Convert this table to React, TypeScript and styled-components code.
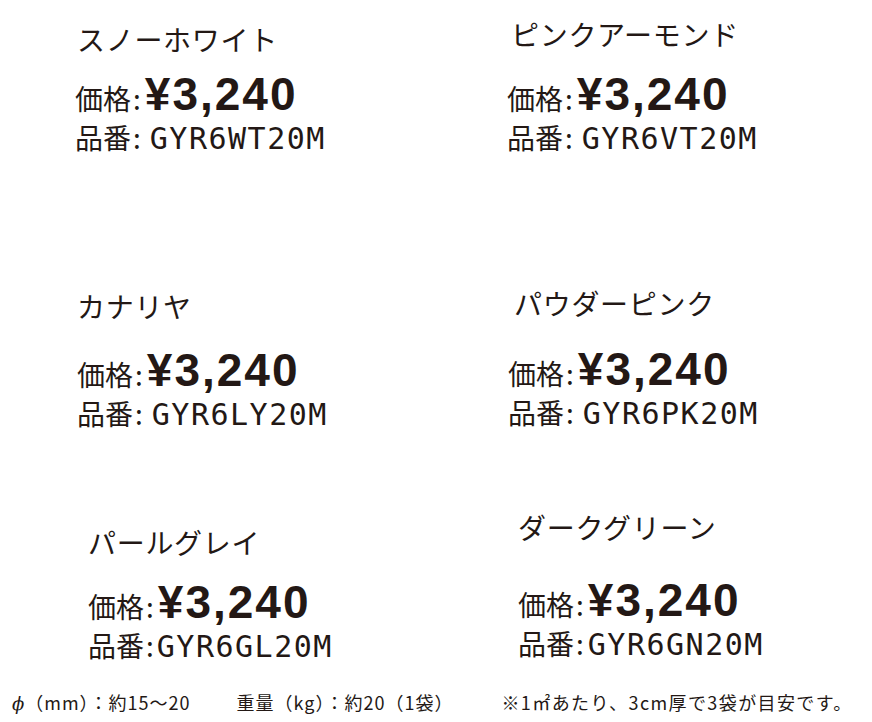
import React from "react";
import styled, { createGlobalStyle } from "styled-components";

const GlobalStyle = createGlobalStyle`
  html, body {
    margin: 0;
    padding: 0;
    background: #ffffff;
  }
  body {
    width: 872px;
    height: 722px;
    overflow: hidden;
    font-family: "Noto Sans CJK JP", "Noto Sans", sans-serif;
    color: #231815;
  }
`;

const Page = styled.div`
  width: 872px;
  height: 722px;
  display: flex;
  flex-direction: column;
`;

const Grid = styled.div`
  display: grid;
  grid-template-columns: 432px 1fr;
  grid-template-rows: 156px 276px 232px;
`;

const Card = styled.div<{ $x: number; $lift: number }>`
  align-self: end;
  display: flex;
  flex-direction: column;
  margin-left: ${(p) => p.$x}px;
  margin-bottom: ${(p) => p.$lift}px;
`;

const Name = styled.div<{ $gap: number; $indent: number }>`
  font-size: 28px;
  line-height: 32px;
  letter-spacing: 0.7px;
  margin-bottom: ${(p) => p.$gap}px;
  padding-left: ${(p) => p.$indent}px;
  white-space: nowrap;
`;

const Row = styled.div<{ $space?: number }>`
  display: flex;
  align-items: baseline;
  white-space: nowrap;
  margin-bottom: ${(p) => p.$space ?? 0}px;
`;

const Label = styled.span`
  font-size: 28px;
  line-height: 32px;
`;

const Colon = styled.span<{ $right: number }>`
  font-size: 28px;
  line-height: 32px;
  margin: 0 ${(p) => p.$right}px 0 2px;
`;

const Amount = styled.span`
  font-family: "Liberation Sans", Arial, sans-serif;
  font-weight: 700;
  font-size: 46px;
  line-height: 44px;
  letter-spacing: 2px;
`;

const Code = styled.span`
  font-family: "DejaVu Sans Mono", "Liberation Mono", monospace;
  font-size: 30px;
  line-height: 34px;
  letter-spacing: 1.5px;
`;

const Footer = styled.div`
  display: flex;
  align-items: baseline;
  margin-top: 26px;
  padding-left: 12px;
  font-size: 18px;
  line-height: 24px;
  letter-spacing: 1px;
  white-space: nowrap;
`;

const Phi = styled.span`
  font-family: "DejaVu Serif", serif;
  font-style: italic;
`;

const Note = styled.span<{ $gap: number; $track?: number }>`
  margin-left: ${(p) => p.$gap}px;
  letter-spacing: ${(p) => p.$track ?? 1}px;
`;

type Item = {
  name: string;
  code: string;
  x: number;
  gap: number;
  indent: number;
  codeGap: number;
  lift: number;
};

const items: Item[] = [
  { name: "スノーホワイト", code: "GYR6WT20M", x: 75, gap: 17, indent: 2, codeGap: 9, lift: 0 },
  { name: "ピンクアーモンド", code: "GYR6VT20M", x: 75, gap: 22, indent: 4, codeGap: 9, lift: 0 },
  { name: "カナリヤ", code: "GYR6LY20M", x: 77, gap: 26, indent: 0, codeGap: 9, lift: 0 },
  { name: "パウダーピンク", code: "GYR6PK20M", x: 76, gap: 28, indent: 6, codeGap: 9, lift: 1 },
  { name: "パールグレイ", code: "GYR6GL20M", x: 88, gap: 22, indent: 0, codeGap: 3, lift: 0 },
  { name: "ダークグリーン", code: "GYR6GN20M", x: 86, gap: 35, indent: 0, codeGap: 4, lift: 2 },
];

export default function App() {
  return (
    <Page>
      <GlobalStyle />
      <Grid>
        {items.map((it) => (
          <Card key={it.code} $x={it.x} $lift={it.lift}>
            <Name $gap={it.gap} $indent={it.indent}>
              {it.name}
            </Name>
            <Row $space={5}>
              <Label>価格</Label>
              <Colon $right={4}>:</Colon>
              <Amount>¥3,240</Amount>
            </Row>
            <Row>
              <Label>品番</Label>
              <Colon $right={it.codeGap}>:</Colon>
              <Code>{it.code}</Code>
            </Row>
          </Card>
        ))}
      </Grid>
      <Footer>
        <span>
          <Phi>ϕ</Phi>（mm）：約15〜20
        </span>
        <Note $gap={46}>重量（kg）：約20（1袋）</Note>
        <Note $gap={48} $track={1.4}>
          ※1㎡あたり、3cm厚で3袋が目安です。
        </Note>
      </Footer>
    </Page>
  );
}
